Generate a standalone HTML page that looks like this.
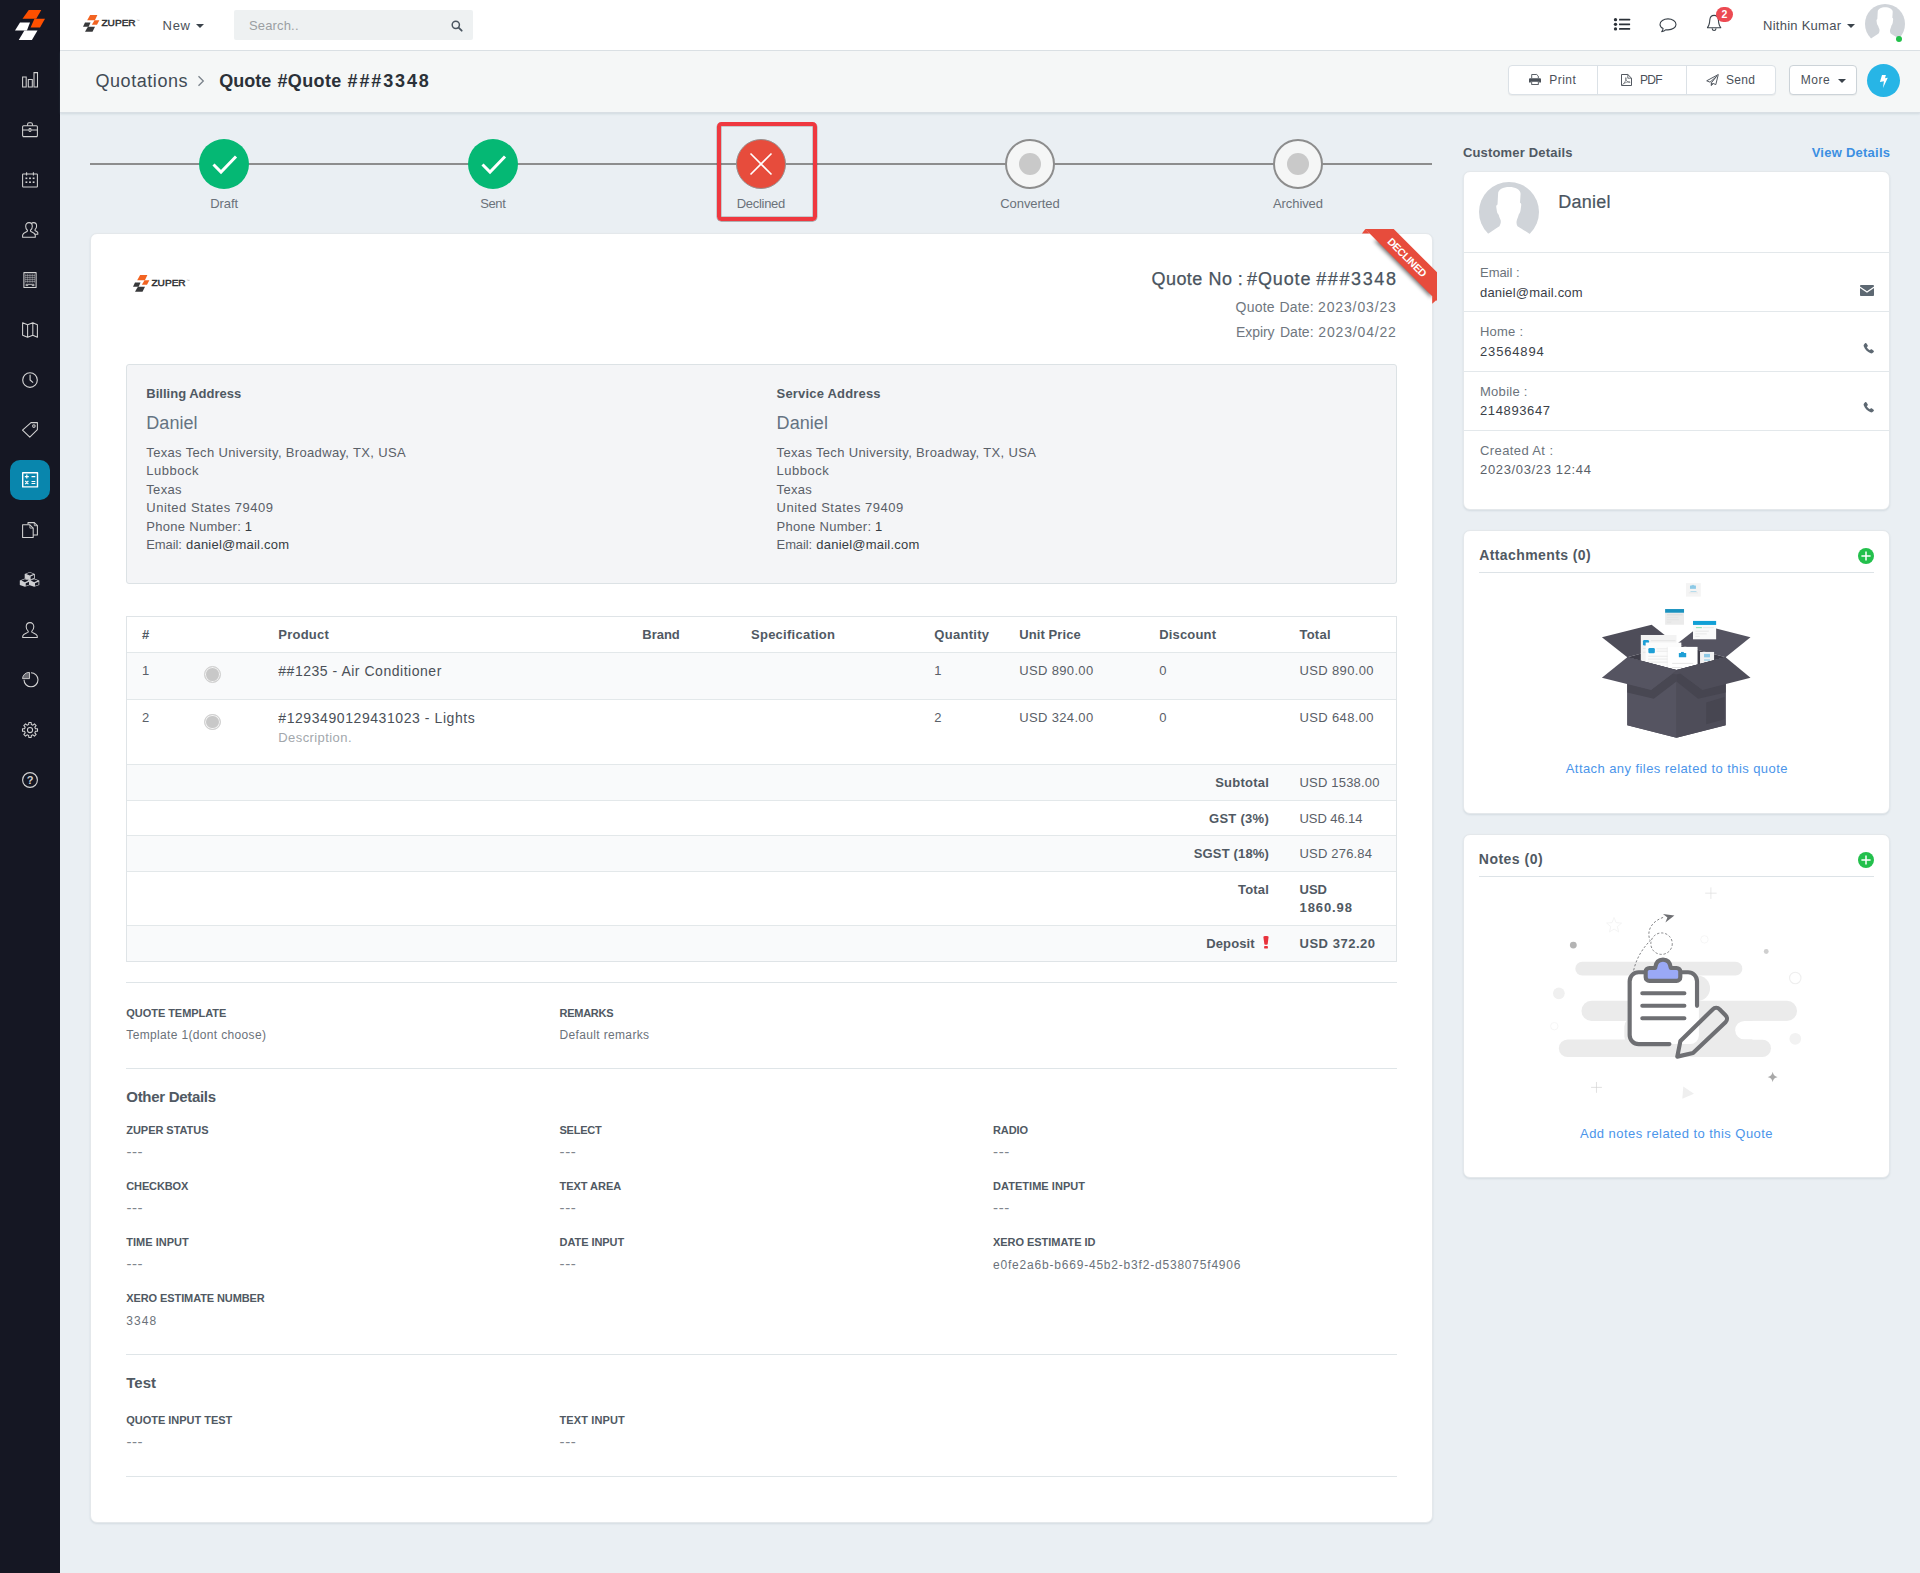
<!DOCTYPE html><html><head><meta charset="utf-8"><title>Quote #Quote ###3348</title><style>
*{box-sizing:border-box;margin:0;padding:0}
html,body{width:1920px;height:1573px;overflow:hidden}
body{position:relative;background:#eaeff3;font-family:"Liberation Sans",sans-serif;font-size:13px;color:#5a6068}
.t{position:absolute;white-space:nowrap;line-height:1;display:block}
.a{position:absolute;display:block}
.card{position:absolute;background:#fff;border:1px solid #e4e8eb;border-radius:7px;box-shadow:0 1px 2px rgba(60,80,100,.12)}
.hr{position:absolute;height:1px;background:#dfe5e8}
svg{position:absolute;overflow:visible}

</style></head><body>
<div class="a" style="left:0;top:0;width:60px;height:1573px;background:#151723"></div>
<div class="a" style="left:60px;top:0;width:1860px;height:51px;background:#fff;border-bottom:1px solid #dde2e6"></div>
<div class="a" style="left:60px;top:51px;width:1860px;height:62px;background:#f5f7f7;border-bottom:1px solid #d9dfe4;box-shadow:0 1px 2px rgba(120,140,160,.22)"></div>
<div class="a" style="left:234px;top:10px;width:239px;height:30px;background:#eef1f2;border-radius:2px"></div>
<div class="card" style="left:90px;top:233px;width:1343px;height:1290px"></div>
<div class="a" style="left:126px;top:364px;width:1271px;height:220px;background:#f4f5f7;border:1px solid #dce2e5;border-radius:3px"></div>
<div class="card" style="left:1463px;top:171px;width:427px;height:339px"></div>
<div class="card" style="left:1463px;top:530px;width:427px;height:284px"></div>
<div class="card" style="left:1463px;top:834px;width:427px;height:344px"></div>
<svg style="left:196px;top:24px" width="8" height="4" viewBox="0 0 8 4"><path d="M0 0h8L4 4z" fill="#3b434b"/></svg>
<svg style="left:1847px;top:24px" width="8" height="4" viewBox="0 0 8 4"><path d="M0 0h8L4 4z" fill="#3b434b"/></svg>
<svg style="left:197px;top:75px" width="8" height="12" viewBox="0 0 8 12"><path d="M1.5 1.2L6.3 6 1.5 10.8" fill="none" stroke="#7a828a" stroke-width="1.3"/></svg>
<div class="a" style="left:1508px;top:65px;width:268px;height:30px;background:#fff;border:1px solid #dbe1e6;border-radius:4px;box-shadow:0 1px 1px rgba(0,0,0,.05)"></div>
<div class="a" style="left:1597px;top:65px;width:1px;height:30px;background:#dbe1e6"></div>
<div class="a" style="left:1686px;top:65px;width:1px;height:30px;background:#dbe1e6"></div>
<div class="a" style="left:1789px;top:65px;width:68px;height:30px;background:#fff;border:1px solid #ccd3d8;border-radius:4px;box-shadow:0 1px 1px rgba(0,0,0,.05)"></div>
<div class="a" style="left:1866.800px;top:63.500px;width:33.400px;height:33.400px;background:#27b5e6;border-radius:50%"></div>
<svg style="left:1838px;top:79px" width="8" height="4" viewBox="0 0 8 4"><path d="M0 0h8L4 4z" fill="#3b434b"/></svg>
<div class="a" style="left:90px;top:162.5px;width:1342px;height:2px;background:#8d8d8d"></div>
<div class="a" style="left:199.2px;top:139px;width:50px;height:50px;border-radius:50%;background:#05b874"></div>
<svg style="left:199.2px;top:139px" width="50" height="50" viewBox="0 0 50 50"><path d="M14.5 25.5L22 33 37 17.5" fill="none" stroke="#fff" stroke-width="3"/></svg>
<div class="a" style="left:468px;top:139px;width:50px;height:50px;border-radius:50%;background:#05b874"></div>
<svg style="left:468px;top:139px" width="50" height="50" viewBox="0 0 50 50"><path d="M14.5 25.5L22 33 37 17.5" fill="none" stroke="#fff" stroke-width="3"/></svg>
<div class="a" style="left:717.300px;top:121.600px;width:99.300px;height:99px;border:4.200px solid #ef383f;border-radius:4.500px;box-shadow:0 .4px 0 .4px rgba(80,70,70,.5), inset 0 0 0 .5px rgba(80,70,70,.45)"></div>
<div class="a" style="left:736px;top:139px;width:50px;height:50px;border-radius:50%;background:#e74c3c;border:1px solid #97908f"></div>
<svg style="left:736px;top:139px" width="50" height="50" viewBox="0 0 50 50"><path d="M14.5 14.5L35.5 35.5M35.5 14.5L14.5 35.5" fill="none" stroke="#fff" stroke-width="1.6"/></svg>
<div class="a" style="left:1005px;top:139px;width:50px;height:50px;border-radius:50%;background:#f5f6f6;border:2px solid #8d8d8d"></div>
<div class="a" style="left:1019px;top:153px;width:22px;height:22px;border-radius:50%;background:#c9c9c9"></div>
<div class="a" style="left:1273px;top:139px;width:50px;height:50px;border-radius:50%;background:#f5f6f6;border:2px solid #8d8d8d"></div>
<div class="a" style="left:1287px;top:153px;width:22px;height:22px;border-radius:50%;background:#c9c9c9"></div>
<svg style="left:1340px;top:229.200px;overflow:hidden" width="97" height="90" viewBox="1340 229.200 97 90">
<defs><filter id="rsh" x="-30%" y="-30%" width="160%" height="160%"><feGaussianBlur stdDeviation="2.300"/></filter></defs>
<path d="M1376 238l8 0 50 50 0 8z" fill="#000" opacity=".62" filter="url(#rsh)" transform="translate(-2.100 2.100)"/>
<path d="M1361.900 233.700l3.500-4.500 4.200 4.500z" fill="#e74c3c"/><path d="M1437 299.800l-4.800 4.100v-7.600z" fill="#e74c3c"/>
<path d="M1365.100 229.200h28.600L1437 272.500v28.600z" fill="#e74c3c"/>
<text x="0" y="0" transform="translate(1407.200 257.600) rotate(45)" text-anchor="middle" font-family="Liberation Sans, sans-serif" font-size="10.500" font-weight="700" fill="#fff" dy="3.750" textLength="50.500">DECLINED</text>
</svg>
<div class="a" style="left:126px;top:616px;width:1271px;height:346px;border:1px solid #dfe4e7;background:#fff"></div>
<div class="a" style="left:127px;top:653px;width:1269px;height:46px;background:#f9fafb"></div>
<div class="a" style="left:127px;top:765px;width:1269px;height:35px;background:#f9fafb"></div>
<div class="a" style="left:127px;top:836px;width:1269px;height:35px;background:#f9fafb"></div>
<div class="a" style="left:127px;top:926px;width:1269px;height:35px;background:#f9fafb"></div>
<div class="a" style="left:127px;top:652px;width:1269px;height:1px;background:#e3e8ea"></div>
<div class="a" style="left:127px;top:699px;width:1269px;height:1px;background:#e3e8ea"></div>
<div class="a" style="left:127px;top:764px;width:1269px;height:1px;background:#e3e8ea"></div>
<div class="a" style="left:127px;top:800px;width:1269px;height:1px;background:#e3e8ea"></div>
<div class="a" style="left:127px;top:835px;width:1269px;height:1px;background:#e3e8ea"></div>
<div class="a" style="left:127px;top:871px;width:1269px;height:1px;background:#e3e8ea"></div>
<div class="a" style="left:127px;top:925px;width:1269px;height:1px;background:#e3e8ea"></div>
<div class="a" style="left:203.900px;top:666.4px;width:16.800px;height:16.800px;border-radius:50%;background:#c8c8c8;border:1px solid #d2d2d2;box-shadow:inset 0 0 0 1px #f3f3f3"></div>
<div class="a" style="left:203.900px;top:713.5px;width:16.800px;height:16.800px;border-radius:50%;background:#c8c8c8;border:1px solid #d2d2d2;box-shadow:inset 0 0 0 1px #f3f3f3"></div>
<svg style="left:1263px;top:935.500px" width="6" height="13" viewBox="0 0 6 13"><path d="M.4 .900C.4 .300 1.500 0 3 0s2.600.300 2.600.900L4.700 8c-.1.600-.8.800-1.700.800S1.400 8.600 1.300 8z" fill="#e8323c"/><rect x="1.100" y="9.900" width="3.800" height="2.700" rx=".9" fill="#e8323c"/></svg>
<div class="hr" style="left:126px;top:982px;width:1271px"></div>
<div class="hr" style="left:126px;top:1068px;width:1271px"></div>
<div class="hr" style="left:126px;top:1354px;width:1271px"></div>
<div class="hr" style="left:126px;top:1476px;width:1271px"></div>
<svg style="left:1479px;top:182px" width="60" height="60" viewBox="-30 -30 60 60">
<circle r="30" fill="#d0d4d9"/>
<g><path d="M.400-25.100C-6-25.100-10.900-22.500-10.900-18.250L-11.500-7.500c-.900.500-1.400 1.400-1.250 2.400l.650 4.350c.100 1.200.900 2.600 1.850 3.750.400 2 1.300 3.600 1.850 5 .500 1.700.100 4.300-1.200 6.250C-13 16.500-17.500 19.500-20.900 21.750L-32 27v8h64v-8L20.400 21.750C17 19.500 12 16.500 8.500 14.250 7.300 12 7.300 9.800 7.900 8c.500-1.500 1.400-3.600 1.850-5.600.900-1.100 1.650-2.700 1.850-4.400l.650-5c.100-1-.350-1.900-1.250-2.300l.600-8.950C11.600-22.500 6-25.100.400-25.100z" fill="#fff"/></g></svg>
<div class="hr" style="left:1464px;top:252px;width:425px;background:#e3e8eb"></div>
<div class="hr" style="left:1464px;top:311px;width:425px;background:#e3e8eb"></div>
<div class="hr" style="left:1464px;top:371px;width:425px;background:#e3e8eb"></div>
<div class="hr" style="left:1464px;top:430px;width:425px;background:#e3e8eb"></div>
<svg style="left:1859.5px;top:284.8px" width="14" height="11" viewBox="0 0 14 11"><path d="M0 1.100C0 .5.500 0 1.100 0h11.800c.6 0 1.100.5 1.100 1.100v.5L7 6.200 0 1.600zM0 3.100v6.800c0 .6.500 1.100 1.100 1.100h11.800c.6 0 1.100-.5 1.100-1.100V3.100L7 7.700z" fill="#5d6872"/></svg>
<svg style="left:1862.5px;top:343px" width="11" height="11" viewBox="0 0 12 12"><path d="M2.300.3C2.700-.1 3.300 0 3.600.4l1.500 2.100c.3.400.2.900-.1 1.200l-.9.800c.8 1.500 1.900 2.600 3.400 3.400l.8-.9c.3-.3.800-.4 1.200-.1l2.100 1.500c.4.300.5.900.1 1.300l-1 1c-.6.600-1.500.800-2.300.5C4.700 9.900 2.100 7.300.8 3.600.5 2.800.7 1.900 1.300 1.300z" fill="#5d6872"/></svg>
<svg style="left:1862.5px;top:402px" width="11" height="11" viewBox="0 0 12 12"><path d="M2.300.3C2.700-.1 3.300 0 3.600.4l1.500 2.100c.3.400.2.900-.1 1.200l-.9.800c.8 1.500 1.900 2.600 3.400 3.400l.8-.9c.3-.3.800-.4 1.200-.1l2.100 1.500c.4.300.5.900.1 1.300l-1 1c-.6.600-1.500.800-2.300.5C4.700 9.900 2.100 7.300.8 3.600.5 2.800.7 1.900 1.300 1.300z" fill="#5d6872"/></svg>
<svg style="left:1858.2px;top:547.7px" width="16" height="16" viewBox="0 0 16 16"><circle cx="8" cy="8" r="8" fill="#23c04c"/><path d="M8 3.400v9.200M3.400 8h9.200" stroke="#fff" stroke-width="1.500"/></svg>
<svg style="left:1858.2px;top:852px" width="16" height="16" viewBox="0 0 16 16"><circle cx="8" cy="8" r="8" fill="#23c04c"/><path d="M8 3.400v9.200M3.400 8h9.200" stroke="#fff" stroke-width="1.500"/></svg>
<div class="hr" style="left:1479px;top:572px;width:395px;background:#dde3e7"></div>
<div class="hr" style="left:1479px;top:876px;width:395px;background:#dde3e7"></div>
<svg style="left:15px;top:10px" width="30" height="30" viewBox="0 0 30 30">
<path d="M13.750 0h12.500l-5 8.750H7.500z" fill="#fe5000"/><path d="M19.400 8.750H30l-5 8.750h-9.400z" fill="#fe5000"/>
<path d="M5 12.500h10l-3.100 8.100H0z" fill="#fff"/><path d="M9.400 20.600h13.100L16.900 30H3.750z" fill="#fff"/></svg>
<svg style="left:83.1px;top:15.3px" width="60" height="18" viewBox="0 0 60 18">
<path d="M7.100 0h7.300l-2.500 5.300H4.200z" fill="#f26321"/><path d="M11.500 5.300h4.900L14 9.700H8.900z" fill="#f26321"/>
<path d="M2 7.600h5.500L5.700 11.700H0z" fill="#38393b"/><path d="M4.900 11.800H12l-2.500 5H2z" fill="#38393b"/>
<text x="18.400" y="11.350" font-family="Liberation Sans, sans-serif" font-size="8.400" font-weight="400" fill="#2c2d2f" stroke="#2c2d2f" stroke-width=".38" textLength="34.300" lengthAdjust="spacingAndGlyphs">ZUPER</text>
<text x="53.800" y="7" font-family="Liberation Sans, sans-serif" font-size="3.200" fill="#9a9a9a">™</text></svg>
<svg style="left:133.1px;top:275.4px" width="60" height="18" viewBox="0 0 60 18">
<path d="M7.100 0h7.300l-2.500 5.300H4.200z" fill="#f26321"/><path d="M11.500 5.300h4.900L14 9.700H8.900z" fill="#f26321"/>
<path d="M2 7.600h5.500L5.700 11.700H0z" fill="#38393b"/><path d="M4.900 11.800H12l-2.500 5H2z" fill="#38393b"/>
<text x="18.400" y="11.350" font-family="Liberation Sans, sans-serif" font-size="8.400" font-weight="400" fill="#2c2d2f" stroke="#2c2d2f" stroke-width=".38" textLength="34.300" lengthAdjust="spacingAndGlyphs">ZUPER</text>
<text x="53.800" y="7" font-family="Liberation Sans, sans-serif" font-size="3.200" fill="#9a9a9a">™</text></svg>
<div class="a" style="left:10px;top:460px;width:40px;height:40px;border-radius:10px;background:#0986ad"></div>
<svg style="left:22px;top:72px" width="16" height="16" viewBox="0 0 16 16" fill="none" stroke="#d2d2d2" stroke-width="1.05" stroke-linejoin="round"><path d="M.600 5h3.600v10H.600zM6.300 7.500h4V15h-4zM12 .600h3.500V15H12z" stroke-linejoin="miter"/></svg>
<svg style="left:22px;top:122px" width="16" height="16" viewBox="0 0 16 16" fill="none" stroke="#d2d2d2" stroke-width="1.05" stroke-linejoin="round"><rect x=".600" y="3.700" width="14.800" height="10.700" rx="1"/><path d="M5.600 3.700V2.300c0-1 .600-1.600 1.400-1.600h2c.8 0 1.400.6 1.400 1.600v1.400M.600 8h6.200M9.200 8h6.200M.800 14.600h14.400" /><rect x="7" y="6.600" width="2" height="2.800" rx=".8"/></svg>
<svg style="left:22px;top:172px" width="16" height="16" viewBox="0 0 16 16" fill="none" stroke="#d2d2d2" stroke-width="1.05" stroke-linejoin="round"><rect x=".600" y="2" width="14.800" height="13" rx=".6"/><path d="M4.600 .3v3.200M11.400 .3v3.200"/><g stroke="none" fill="#d2d2d2"><rect x="3.500" y="5.500" width="1.800" height="1.600"/><rect x="7.100" y="5.500" width="1.800" height="1.600"/><rect x="10.700" y="5.500" width="1.800" height="1.600"/><rect x="3.500" y="9.400" width="1.800" height="1.600"/><rect x="7.100" y="9.400" width="1.800" height="1.600"/><rect x="10.700" y="9.400" width="1.800" height="1.600"/></g></svg>
<svg style="left:22px;top:222px" width="16" height="16" viewBox="0 0 16 16" fill="none" stroke="#d2d2d2" stroke-width="1.05" stroke-linejoin="round"><path d="M9.300 1.700C10 .9 10.800 .6 11.600 .6c1.800 0 3 1.500 3 3.400 0 1.500-.6 2.700-1.400 3.400-.3.300-.3 1.100.2 1.400.9.500 2.200 1.100 2.400 1.800v1.700h-3"/><path d="M7 .6c2 0 3.300 1.600 3.300 3.700 0 1.600-.7 3-1.600 3.700-.4.300-.3 1.200.2 1.500 1.400.800 3.900 1.600 4.300 3.300.1.600.1 1.600.1 2.400H.600c0-.8 0-1.800.1-2.400.400-1.700 2.900-2.500 4.300-3.300.5-.3.600-1.200.2-1.500C4.300 7.300 3.700 5.900 3.700 4.300 3.700 2.200 5 .6 7 .6z"/></svg>
<svg style="left:22px;top:272px" width="16" height="16" viewBox="0 0 16 16" fill="none" stroke="#d2d2d2" stroke-width="1.05" stroke-linejoin="round"><rect x="1.900" y=".600" width="12.200" height="14.800"/><g stroke-width=".55" opacity=".75"><path d="M3.800 2v8.800M5.500 2v8.800M7.200 2v8.800M8.900 2v8.800M10.600 2v8.800M12.300 2v8.800M3 3.500h10M3 5.500h10M3 7.500h10M3 9.500h10"/></g><path d="M3.600 12.300h8.800M3.600 13.600h2.600M9.800 13.600h2.600" stroke-width=".9"/></svg>
<svg style="left:22px;top:322px" width="16" height="16" viewBox="0 0 16 16" fill="none" stroke="#d2d2d2" stroke-width="1.05" stroke-linejoin="round"><path d="M.600 .700L5.600 2.700 10.800 .700 15.400 2.700V15.300L10.800 13.300 5.600 15.300.600 13.300zM5.600 2.700v12.600M10.800 .700v12.600"/></svg>
<svg style="left:22px;top:372px" width="16" height="16" viewBox="0 0 16 16" fill="none" stroke="#d2d2d2" stroke-width="1.15" stroke-linejoin="round"><circle cx="8" cy="8" r="7.300"/><path d="M8.100 2.800V8l3 2.600"/></svg>
<svg style="left:22px;top:422px" width="16" height="16" viewBox="0 0 16 16" fill="none" stroke="#d2d2d2" stroke-width="1.05" stroke-linejoin="round"><path d="M9 .600h6.400V7.600L7.800 15.200.500 8.200z"/><circle cx="11.900" cy="4.100" r="1.300"/></svg>
<svg style="left:22px;top:472px" width="16" height="16" viewBox="0 0 16 16" fill="none" stroke="#fff" stroke-width="1.05" stroke-linejoin="round"><rect x=".700" y=".700" width="14.800" height="14.200" stroke-width="1.400"/><path d="M2.800 4.600h4M4.800 2.600v4M9.500 4.600h3.800M3.200 8.900l3.200 3.200M6.400 8.900L3.200 12.100M9.500 9.500h3.800M9.500 11.500h3.800" stroke-width="1.200"/></svg>
<svg style="left:22px;top:522px" width="16" height="16" viewBox="0 0 16 16" fill="none" stroke="#d2d2d2" stroke-width="1.05" stroke-linejoin="round"><path d="M6 2.300V.600h6.300l3.100 3.100v9.200h-4.200"/><path d="M12.300 .600v3.100h3.100" stroke-width=".8"/><path d="M.600 2.800h7.300l3.300 3.300v9.300H.600z"/><path d="M7.900 2.800v3.300h3.300" stroke-width=".8"/></svg>
<svg style="left:15px;top:565px" width="30" height="30" viewBox="15 565 30 30"><path d="M29.80 571.90L34.90 574.00L34.90 578.50L29.80 580.20L24.70 578.50L24.70 574.00z" fill="#cdced1"/><path d="M29.80 572.54L33.37 574.01L29.80 575.62L26.23 574.01z" fill="#151723"/><path d="M34.08 575.04L34.08 578.10L30.62 579.26L30.62 576.60z" fill="#151723"/><path d="M24.90 578.50L30.00 580.60L30.00 585.10L24.90 586.80L19.80 585.10L19.80 580.60z" fill="#cdced1"/><path d="M24.90 579.14L28.47 580.62L24.90 582.23L21.33 580.62z" fill="#151723"/><path d="M29.18 581.64L29.18 584.70L25.72 585.86L25.72 583.20z" fill="#151723"/><path d="M34.20 578.50L39.30 580.60L39.30 585.10L34.20 586.80L29.10 585.10L29.10 580.60z" fill="#cdced1"/><path d="M34.20 579.14L37.77 580.62L34.20 582.23L30.63 580.62z" fill="#151723"/><path d="M38.48 581.64L38.48 584.70L35.02 585.86L35.02 583.20z" fill="#151723"/></svg>
<svg style="left:22px;top:622px" width="16" height="16" viewBox="0 0 16 16" fill="none" stroke="#d2d2d2" stroke-width="1.05" stroke-linejoin="round"><path d="M8 .600c2.300 0 3.800 1.800 3.800 4.200 0 1.800-.8 3.300-1.800 4.100-.4.300-.3 1.200.2 1.500 1.600.800 4.400 1.500 4.900 3.200.2.600.2 1.200.2 1.800H.700c0-.6 0-1.200.2-1.800.5-1.700 3.300-2.400 4.900-3.200.5-.3.600-1.200.2-1.500-1-.800-1.800-2.300-1.800-4.100C4.200 2.400 5.700.6 8 .6z"/></svg>
<svg style="left:22px;top:672px" width="16" height="16" viewBox="0 0 16 16" fill="none" stroke="#d2d2d2" stroke-width="1.1" stroke-linejoin="round"><path d="M9 .800A7 7 0 1 1 2 7.800"/><path d="M.500 6.600A6.600 6.600 0 0 1 7.500 .400V6.600z" fill="#d2d2d2" fill-opacity=".45" stroke-width=".9"/></svg>
<svg style="left:22px;top:722px" width="16" height="16" viewBox="0 0 16 16" fill="none" stroke="#d2d2d2" stroke-width="1.05" stroke-linejoin="round"><path d="M6.81 0.49L9.19 0.49L9.31 2.55L10.93 3.23L12.47 1.85L14.15 3.53L12.77 5.07L13.45 6.69L15.51 6.81L15.51 9.19L13.45 9.31L12.77 10.93L14.15 12.47L12.47 14.15L10.93 12.77L9.31 13.45L9.19 15.51L6.81 15.51L6.69 13.45L5.07 12.77L3.53 14.15L1.85 12.47L3.23 10.93L2.55 9.31L0.49 9.19L0.49 6.81L2.55 6.69L3.23 5.07L1.85 3.53L3.53 1.85L5.07 3.23L6.69 2.55z"/><circle cx="8" cy="8" r="2.600"/></svg>
<svg style="left:22px;top:772px" width="16" height="16" viewBox="0 0 16 16" fill="none" stroke="#d2d2d2" stroke-width="1.15" stroke-linejoin="round"><circle cx="8" cy="8" r="7.400"/><text x="8" y="12" text-anchor="middle" font-family="Liberation Sans, sans-serif" font-size="11" font-weight="700" fill="#d2d2d2" stroke="none">?</text></svg>
<svg style="left:1613px;top:17px" width="18" height="14" viewBox="1613 17 18 14"><g fill="#2b3138"><circle cx="1615.500" cy="19.700" r="1.650"/><circle cx="1615.500" cy="24.300" r="1.650"/><circle cx="1615.500" cy="28.900" r="1.650"/><rect x="1619" y="18.800" width="11.100" height="1.800" rx=".4"/><rect x="1619" y="23.400" width="11.100" height="1.800" rx=".4"/><rect x="1619" y="28" width="11.100" height="1.800" rx=".4"/></g></svg>
<svg style="left:1659px;top:17px" width="18" height="16" viewBox="1659 17 18 16"><path d="M1668 18.900c4.400 0 8 2.400 8 5.500s-3.600 5.500-8 5.500c-.7 0-1.400-.1-2-.2-1 .9-2.500 1.800-4.300 2 .8-.9 1.300-1.900 1.400-3.200-1.900-1-3.100-2.500-3.100-4.100 0-3.100 3.600-5.500 8-5.500z" fill="none" stroke="#3b434b" stroke-width="1.100" stroke-linejoin="round"/></svg>
<svg style="left:1706px;top:14px" width="17" height="18" viewBox="1706 14 17 18"><path d="M1714.100 15.400c2.600 0 4.100 1.900 4.300 4.600.2 3 .5 5.600 2.300 7.300v.4h-13.200v-.4c1.800-1.700 2.100-4.300 2.300-7.300.2-2.700 1.700-4.600 4.300-4.600z" fill="none" stroke="#3b434b" stroke-width="1.100" stroke-linejoin="round"/><path d="M1712.100 28.300c.2 1.300 1 2.200 2 2.200s1.800-.9 2-2.200" fill="none" stroke="#3b434b" stroke-width="1.100"/></svg>
<div class="a" style="left:1716.100px;top:6.700px;width:16.800px;height:15.300px;border-radius:7.650px;background:#ec4a52"></div>
<svg style="left:1865px;top:4px" width="40" height="40" viewBox="-30 -30 60 60">
<circle r="30" fill="#d0d4d9"/>
<g><path d="M.400-25.100C-6-25.100-10.900-22.500-10.900-18.250L-11.500-7.500c-.900.500-1.400 1.400-1.250 2.400l.650 4.350c.100 1.200.900 2.600 1.850 3.750.400 2 1.300 3.600 1.850 5 .500 1.700.100 4.300-1.200 6.250C-13 16.500-17.500 19.500-20.900 21.750L-32 27v8h64v-8L20.400 21.750C17 19.500 12 16.500 8.500 14.250 7.300 12 7.300 9.800 7.900 8c.500-1.500 1.400-3.600 1.850-5.600.900-1.100 1.650-2.700 1.850-4.400l.650-5c.100-1-.350-1.900-1.250-2.300l.600-8.950C11.600-22.500 6-25.100.400-25.100z" fill="#fff"/></g></svg>
<div class="a" style="left:1895.800px;top:35.800px;width:6.400px;height:6.400px;border-radius:50%;background:#22c04a"></div>
<svg style="left:451px;top:19.500px" width="12" height="12" viewBox="0 0 12 12"><circle cx="4.800" cy="4.800" r="3.600" fill="none" stroke="#4a5560" stroke-width="1.500"/><path d="M7.600 7.600l3.100 3.100" stroke="#4a5560" stroke-width="1.800" stroke-linecap="round"/></svg>
<svg style="left:1529px;top:74px" width="12" height="11" viewBox="0 0 12 11"><path d="M2.700 4.200V.500h5l1.600 1.600v2.100" fill="#fff" stroke="#4a5058" stroke-width=".9"/><path d="M1.200 4.200h9.600c.7 0 1.200.5 1.200 1.200v3.100h-1.900V7.200H1.900v1.300H0V5.400c0-.7.500-1.200 1.200-1.200z" fill="#4a5058"/><rect x="2.700" y="7.300" width="6.600" height="3.200" fill="#fff" stroke="#4a5058" stroke-width=".9"/></svg>
<svg style="left:1620.500px;top:74px" width="11" height="12" viewBox="0 0 11 12"><path d="M.500 .500h6.300l3.700 3.700v7.300H.500z" fill="none" stroke="#4a5058" stroke-width=".95"/><path d="M6.800 .500v3.700h3.700" fill="none" stroke="#4a5058" stroke-width=".8"/><path d="M2 10.300c1.400-1 2.800-3.600 3.200-6.100.1-.8-.8-.8-.7 0 .3 2.200 2 4 4 4.300.9.100.9-.8 0-.8-2 .1-4.600 1-6.200 2.200-.6.500-.9.800-.3.400z" fill="none" stroke="#4a5058" stroke-width=".6"/></svg>
<svg style="left:1706px;top:74px" width="13" height="12" viewBox="0 0 13 12"><path d="M12.300 .500L.700 6.800l3.300 1.400 6.600-5.800-5.300 6.500v2.700l1.900-2.100 2.600 1.100z" fill="none" stroke="#4a5058" stroke-width=".95" stroke-linejoin="round"/><path d="M5.300 8.900l1.900 .6-1.900 2.100z" fill="#4a5058"/></svg>
<svg style="left:1879px;top:74px" width="10" height="15" viewBox="1879 74 10 15"><path d="M1882 75.100h3.900l-.9 3.100 2.800-.5-4.800 10.400.9-6.900-4 .7z" fill="#fff"/></svg>
<svg style="left:1590px;top:575px" width="175" height="170" viewBox="0 0 1619 1573">
<path d="M110 575L570 460 800 640 345 760z" fill="#4e4d59"/>
<path d="M1485 575L1030 460 800 640 1255 760z" fill="#555461"/>
<path d="M345 760L800 640 1255 760 800 880z" fill="#3f3e49"/>
<g>
<rect x="470" y="555" width="330" height="300" fill="#f3f3f3"/><rect x="490" y="602" width="56" height="50" rx="12" fill="#1e9fd6"/><path d="M565 607h225M490 680h290M490 715h290" stroke="#e4e4e4" stroke-width="9"/>
<rect x="515" y="625" width="330" height="260" fill="#fcfcfc"/><rect x="540" y="675" width="60" height="50" rx="12" fill="#1e9fd6"/><path d="M615 683h200M615 705h160M538 752h280M538 778h280M538 806h280" stroke="#e9e9e9" stroke-width="9"/>
<rect x="720" y="665" width="275" height="230" fill="#fff"/><path d="M715 665v230" stroke="#eee" stroke-width="6"/><rect x="822" y="722" width="68" height="40" rx="5" fill="#1e9fd6"/><rect x="842" y="712" width="26" height="14" fill="#1e9fd6"/><path d="M760 818h195M760 856h90" stroke="#e2e2e2" stroke-width="8"/>
<rect x="1018" y="712" width="130" height="130" fill="#f1f1f1"/><rect x="1055" y="730" width="55" height="32" fill="#8cc9e6"/><rect x="1055" y="778" width="55" height="18" fill="#b5dbec"/>
</g>
<path d="M345 760L800 880 1255 760V1390L800 1505 345 1390z" fill="#4e4d59"/>
<path d="M345 760L800 880V1505L345 1390z" fill="#555461"/>
<path d="M800 880L1255 760V1390L800 1505z" fill="#4e4d59"/>
<path d="M345 1005L565 1062 800 885V985L590 1145 345 1088z" fill="#484752"/>
<path d="M800 885L1040 1062 1255 1005V1088L1000 1145 800 985z" fill="#464550"/>
<path d="M1075 1180L1245 1130V1335L1075 1382z" fill="#474651"/>
<path d="M345 758L800 880 1255 758 1255 800 800 920 345 800z" fill="#4e4d59"/>
<path d="M345 760L800 882 565 1065 110 950z" fill="#555461"/>
<path d="M800 882L1255 760 1485 950 1040 1065z" fill="#4e4d59"/>
<rect x="695" y="315" width="175" height="145" fill="#ebebeb"/><rect x="695" y="315" width="175" height="34" fill="#1a92bf"/><path d="M712 368h145" stroke="#dcdcdc" stroke-width="10"/><path d="M712 392h105M712 414h110M712 436h40" stroke="#e2e2e2" stroke-width="8"/>
<rect x="953" y="425" width="214" height="170" fill="#fafafa"/><rect x="953" y="425" width="214" height="37" fill="#12a0d6"/><path d="M980 487h55" stroke="#8fe3b5" stroke-width="10"/><path d="M1045 487h100M975 520h125M975 545h105M975 568h40" stroke="#e6e6e6" stroke-width="8"/>
<rect x="888" y="75" width="137" height="125" fill="#f4f4f4"/><rect x="925" y="98" width="55" height="30" fill="#8cc9e6"/><rect x="940" y="92" width="24" height="8" fill="#8cc9e6"/><path d="M930 153h55" stroke="#9fd3ea" stroke-width="7"/><path d="M915 165h83" stroke="#e0e0e0" stroke-width="6"/>
</svg>
<svg style="left:1545px;top:880px" width="265" height="225" viewBox="0 0 1853 1573">
<rect x="212" y="572" width="1168" height="96" rx="48" fill="#ebebeb"/>
<circle cx="1065" cy="757" r="89" fill="#ebebeb"/>
<rect x="255" y="845" width="1507" height="140" rx="70" fill="#ebebeb"/>
<rect x="555" y="960" width="900" height="200" rx="65" fill="#ebebeb"/>
<rect x="1330" y="985" width="600" height="130" rx="65" fill="#fff"/>
<rect x="97" y="1115" width="1483" height="123" rx="61" fill="#ebebeb"/>
<rect x="1450" y="985" width="400" height="130" fill="#fff"/>
<path d="M620 632C640 540 690 470 735 425c-30-80 20-140 95-165" fill="none" stroke="#6e6f73" stroke-width="6" stroke-dasharray="16 13"/>
<circle cx="815" cy="445" r="75" fill="none" stroke="#6e6f73" stroke-width="6" stroke-dasharray="16 13"/>
<path d="M825 238l80 10-63 49 14-35z" fill="#6e6f73"/>
<rect x="592" y="645" width="484" height="502" rx="60" fill="#fff"/>
<path d="M870 1147H655c-35 0-63-28-63-63V708c0-35 28-63 63-63h345c35 0 63 28 63 63v172" fill="none" stroke="#6e6f73" stroke-width="29" stroke-linecap="round"/>
<path d="M730 615h40c5-40 25-58 55-58s50 18 55 58h40c15 0 26 10 26 25v40c0 15-11 25-26 25H730c-15 0-26-10-26-25v-40c0-15 11-25 26-25z" fill="#9aa9f6" stroke="#6e6f73" stroke-width="29" stroke-linejoin="round"/>
<path d="M680 791h295M680 879h295M680 967h295" stroke="#6e6f73" stroke-width="28" stroke-linecap="round"/>
<path d="M925 1235l22-110L1172 905c14-14 36-14 50 0l40 40c14 14 14 36 0 50L1035 1210z" fill="none" stroke="#6e6f73" stroke-width="29" stroke-linejoin="round"/>
<path d="M1120 92h80M1160 52v80" stroke="#dedede" stroke-width="5"/>
<path d="M322 1450h76M360 1412v76" stroke="#d0d0d0" stroke-width="4.500"/>
<path d="M483 262l14 36 38 3-29 25 9 37-32-20-32 20 9-37-29-25 38-3z" fill="none" stroke="#f0f0f0" stroke-width="5"/>
<circle cx="198" cy="455" r="24" fill="#b4b4b4"/><circle cx="1547" cy="500" r="17" fill="#cfcfcf"/>
<circle cx="1115" cy="415" r="26" fill="none" stroke="#f3f3f3" stroke-width="5"/>
<circle cx="1750" cy="685" r="40" fill="none" stroke="#efefef" stroke-width="8"/>
<circle cx="65" cy="1022" r="26" fill="none" stroke="#f3f3f3" stroke-width="5"/>
<circle cx="97" cy="792" r="41" fill="#f0f0f0"/><circle cx="1750" cy="1110" r="41" fill="#f2f2f2"/>
<path d="M1592 1340c5 22 12 30 35 37-23 7-30 15-35 37-5-22-12-30-35-37 23-7 30-15 35-37z" fill="#a8a8a8"/>
<path d="M967 1443l75 52-82 34z" fill="#efefef"/>
</svg>
<span class="t" id="t0" style="left:162.50px;top:19.00px;font-size:13px;color:#4a5058;letter-spacing:0.742px;">New</span>
<span class="t" id="t1" style="left:249.00px;top:19.00px;font-size:13px;color:#9b9fa3;letter-spacing:0.154px;">Search..</span>
<span class="t" id="t2" style="left:1763.00px;top:19.00px;font-size:13px;color:#4a5058;letter-spacing:0.260px;">Nithin Kumar</span>
<span class="t" id="t3" style="left:95.50px;top:72.00px;font-size:18px;color:#414b55;letter-spacing:0.549px;">Quotations</span>
<span class="t" id="t4" style="left:219.20px;top:72.00px;font-size:18px;color:#2b3138;font-weight:700;">Quote</span>
<span class="t" id="t5" style="left:277.50px;top:72.00px;font-size:18px;color:#2b3138;font-weight:700;letter-spacing:0.357px;">#Quote</span>
<span class="t" id="t6" style="left:347.50px;top:72.00px;font-size:18px;color:#2b3138;font-weight:700;letter-spacing:1.870px;">###3348</span>
<span class="t" id="t7" style="left:1549.30px;top:74.00px;font-size:12px;color:#4a5058;letter-spacing:0.453px;">Print</span>
<span class="t" id="t8" style="left:1640.00px;top:74.00px;font-size:12px;color:#4a5058;letter-spacing:-0.750px;">PDF</span>
<span class="t" id="t9" style="left:1726.00px;top:74.00px;font-size:12px;color:#4a5058;letter-spacing:0.323px;">Send</span>
<span class="t" id="t10" style="left:1800.80px;top:74.00px;font-size:12px;color:#4a5058;letter-spacing:0.552px;">More</span>
<span class="t" id="t11" style="left:210.20px;top:197.00px;font-size:13px;color:#6b727a;letter-spacing:-0.043px;">Draft</span>
<span class="t" id="t12" style="left:480.25px;top:197.00px;font-size:13px;color:#6b727a;letter-spacing:-0.417px;">Sent</span>
<span class="t" id="t13" style="left:736.75px;top:197.00px;font-size:13px;color:#6b727a;letter-spacing:-0.299px;">Declined</span>
<span class="t" id="t14" style="left:1000.25px;top:197.00px;font-size:13px;color:#6b727a;letter-spacing:-0.061px;">Converted</span>
<span class="t" id="t15" style="left:1273.00px;top:197.00px;font-size:13px;color:#6b727a;letter-spacing:-0.083px;">Archived</span>
<span class="t" id="t16" style="left:1151.50px;top:270.00px;font-size:18px;color:#4a545e;letter-spacing:0.438px;-webkit-text-stroke:.25px #4a545e;">Quote</span>
<span class="t" id="t17" style="left:1208.50px;top:270.00px;font-size:18px;color:#4a545e;letter-spacing:0.384px;-webkit-text-stroke:.25px #4a545e;">No</span>
<span class="t" id="t18" style="left:1237.80px;top:270.00px;font-size:18px;color:#4a545e;-webkit-text-stroke:.25px #4a545e;">:</span>
<span class="t" id="t19" style="left:1247.10px;top:270.00px;font-size:18px;color:#4a545e;letter-spacing:0.851px;-webkit-text-stroke:.25px #4a545e;">#Quote</span>
<span class="t" id="t20" style="left:1316.20px;top:270.00px;font-size:18px;color:#4a545e;letter-spacing:1.604px;-webkit-text-stroke:.25px #4a545e;">###3348</span>
<span class="t" id="t21" style="left:1235.50px;top:300.00px;font-size:14px;color:#6f7780;letter-spacing:0.240px;">Quote</span>
<span class="t" id="t22" style="left:1279.40px;top:300.00px;font-size:14px;color:#6f7780;letter-spacing:0.183px;">Date:</span>
<span class="t" id="t23" style="left:1318.00px;top:300.00px;font-size:14px;color:#6f7780;letter-spacing:0.869px;">2023/03/23</span>
<span class="t" id="t24" style="left:1236.00px;top:325.00px;font-size:14px;color:#6f7780;letter-spacing:-0.061px;">Expiry</span>
<span class="t" id="t25" style="left:1279.90px;top:325.00px;font-size:14px;color:#6f7780;letter-spacing:0.058px;">Date:</span>
<span class="t" id="t26" style="left:1318.30px;top:325.00px;font-size:14px;color:#6f7780;letter-spacing:0.836px;">2023/04/22</span>
<span class="t" id="t27" style="left:146.30px;top:387.00px;font-size:13px;color:#505963;font-weight:700;letter-spacing:0.009px;">Billing Address</span>
<span class="t" id="t28" style="left:146.30px;top:414.00px;font-size:18px;color:#647382;letter-spacing:0.054px;">Daniel</span>
<span class="t" id="t29" style="left:146.30px;top:446.00px;font-size:13px;color:#5a6068;letter-spacing:0.337px;">Texas Tech University, Broadway, TX, USA</span>
<span class="t" id="t30" style="left:146.30px;top:464.00px;font-size:13px;color:#5a6068;letter-spacing:0.507px;">Lubbock</span>
<span class="t" id="t31" style="left:146.30px;top:483.00px;font-size:13px;color:#5a6068;letter-spacing:0.308px;">Texas</span>
<span class="t" id="t32" style="left:146.30px;top:501.00px;font-size:13px;color:#5a6068;letter-spacing:0.488px;">United States 79409</span>
<span class="t" id="t33" style="left:146.30px;top:520.00px;font-size:13px;color:#5a6068;letter-spacing:0.286px;">Phone Number:</span>
<span class="t" id="t34" style="left:244.80px;top:520.00px;font-size:13px;color:#363c42;">1</span>
<span class="t" id="t35" style="left:146.30px;top:538.00px;font-size:13px;color:#5a6068;letter-spacing:-0.125px;">Email:</span>
<span class="t" id="t36" style="left:186.00px;top:538.00px;font-size:13px;color:#363c42;letter-spacing:0.221px;">daniel@mail.com</span>
<span class="t" id="t37" style="left:776.60px;top:387.00px;font-size:13px;color:#505963;font-weight:700;letter-spacing:0.184px;">Service Address</span>
<span class="t" id="t38" style="left:776.60px;top:414.00px;font-size:18px;color:#647382;letter-spacing:0.054px;">Daniel</span>
<span class="t" id="t39" style="left:776.60px;top:446.00px;font-size:13px;color:#5a6068;letter-spacing:0.337px;">Texas Tech University, Broadway, TX, USA</span>
<span class="t" id="t40" style="left:776.60px;top:464.00px;font-size:13px;color:#5a6068;letter-spacing:0.507px;">Lubbock</span>
<span class="t" id="t41" style="left:776.60px;top:483.00px;font-size:13px;color:#5a6068;letter-spacing:0.308px;">Texas</span>
<span class="t" id="t42" style="left:776.60px;top:501.00px;font-size:13px;color:#5a6068;letter-spacing:0.488px;">United States 79409</span>
<span class="t" id="t43" style="left:776.60px;top:520.00px;font-size:13px;color:#5a6068;letter-spacing:0.286px;">Phone Number:</span>
<span class="t" id="t44" style="left:875.10px;top:520.00px;font-size:13px;color:#363c42;">1</span>
<span class="t" id="t45" style="left:776.60px;top:538.00px;font-size:13px;color:#5a6068;letter-spacing:-0.125px;">Email:</span>
<span class="t" id="t46" style="left:816.30px;top:538.00px;font-size:13px;color:#363c42;letter-spacing:0.221px;">daniel@mail.com</span>
<span class="t" id="t47" style="left:142.00px;top:628.00px;font-size:13px;color:#505963;font-weight:700;">#</span>
<span class="t" id="t48" style="left:278.30px;top:628.00px;font-size:13px;color:#505963;font-weight:700;letter-spacing:0.229px;">Product</span>
<span class="t" id="t49" style="left:642.30px;top:628.00px;font-size:13px;color:#505963;font-weight:700;letter-spacing:-0.016px;">Brand</span>
<span class="t" id="t50" style="left:751.00px;top:628.00px;font-size:13px;color:#505963;font-weight:700;letter-spacing:0.257px;">Specification</span>
<span class="t" id="t51" style="left:934.30px;top:628.00px;font-size:13px;color:#505963;font-weight:700;letter-spacing:0.281px;">Quantity</span>
<span class="t" id="t52" style="left:1019.20px;top:628.00px;font-size:13px;color:#505963;font-weight:700;letter-spacing:0.101px;">Unit Price</span>
<span class="t" id="t53" style="left:1159.20px;top:628.00px;font-size:13px;color:#505963;font-weight:700;letter-spacing:0.168px;">Discount</span>
<span class="t" id="t54" style="left:1299.50px;top:628.00px;font-size:13px;color:#505963;font-weight:700;letter-spacing:0.227px;">Total</span>
<span class="t" id="t55" style="left:142.00px;top:664.00px;font-size:13px;color:#5a6068;">1</span>
<span class="t" id="t56" style="left:278.30px;top:664.00px;font-size:14px;color:#4a5058;letter-spacing:0.522px;">##1235 - Air Conditioner</span>
<span class="t" id="t57" style="left:934.30px;top:664.00px;font-size:13px;color:#5a6068;">1</span>
<span class="t" id="t58" style="left:1019.20px;top:664.00px;font-size:13px;color:#5a6068;letter-spacing:0.352px;">USD 890.00</span>
<span class="t" id="t59" style="left:1159.20px;top:664.00px;font-size:13px;color:#5a6068;">0</span>
<span class="t" id="t60" style="left:1299.50px;top:664.00px;font-size:13px;color:#5a6068;letter-spacing:0.352px;">USD 890.00</span>
<span class="t" id="t61" style="left:142.00px;top:711.00px;font-size:13px;color:#5a6068;">2</span>
<span class="t" id="t62" style="left:278.30px;top:711.00px;font-size:14px;color:#4a5058;letter-spacing:0.573px;">#1293490129431023 - Lights</span>
<span class="t" id="t63" style="left:278.30px;top:731.00px;font-size:13px;color:#a2a7ac;letter-spacing:0.414px;">Description.</span>
<span class="t" id="t64" style="left:934.30px;top:711.00px;font-size:13px;color:#5a6068;">2</span>
<span class="t" id="t65" style="left:1019.20px;top:711.00px;font-size:13px;color:#5a6068;letter-spacing:0.352px;">USD 324.00</span>
<span class="t" id="t66" style="left:1159.20px;top:711.00px;font-size:13px;color:#5a6068;">0</span>
<span class="t" id="t67" style="left:1299.50px;top:711.00px;font-size:13px;color:#5a6068;letter-spacing:0.352px;">USD 648.00</span>
<span class="t" id="t68" style="left:1215.20px;top:776.00px;font-size:13px;color:#505963;font-weight:700;letter-spacing:0.229px;">Subtotal</span>
<span class="t" id="t69" style="left:1299.50px;top:776.00px;font-size:13px;color:#5a6068;letter-spacing:0.194px;">USD 1538.00</span>
<span class="t" id="t70" style="left:1209.00px;top:812.00px;font-size:13px;color:#505963;font-weight:700;letter-spacing:0.286px;">GST (3%)</span>
<span class="t" id="t71" style="left:1299.50px;top:812.00px;font-size:13px;color:#5a6068;letter-spacing:-0.074px;">USD 46.14</span>
<span class="t" id="t72" style="left:1193.80px;top:847.00px;font-size:13px;color:#505963;font-weight:700;letter-spacing:0.146px;">SGST (18%)</span>
<span class="t" id="t73" style="left:1299.50px;top:847.00px;font-size:13px;color:#5a6068;letter-spacing:0.186px;">USD 276.84</span>
<span class="t" id="t74" style="left:1238.00px;top:883.00px;font-size:13px;color:#505963;font-weight:700;letter-spacing:0.177px;">Total</span>
<span class="t" id="t75" style="left:1299.50px;top:883.00px;font-size:13px;color:#505963;font-weight:700;letter-spacing:0.023px;">USD</span>
<span class="t" id="t76" style="left:1299.50px;top:901.00px;font-size:13px;color:#505963;font-weight:700;letter-spacing:0.917px;">1860.98</span>
<span class="t" id="t77" style="left:1206.20px;top:937.00px;font-size:13px;color:#505963;font-weight:700;letter-spacing:0.138px;">Deposit</span>
<span class="t" id="t78" style="left:1299.50px;top:937.00px;font-size:13px;color:#505963;font-weight:700;letter-spacing:0.519px;">USD 372.20</span>
<span class="t" id="t79" style="left:126.30px;top:1008.00px;font-size:11px;color:#505963;font-weight:700;letter-spacing:-0.049px;">QUOTE TEMPLATE</span>
<span class="t" id="t80" style="left:126.30px;top:1029.00px;font-size:12px;color:#6b727a;letter-spacing:0.346px;">Template 1(dont choose)</span>
<span class="t" id="t81" style="left:559.50px;top:1008.00px;font-size:11px;color:#505963;font-weight:700;letter-spacing:-0.271px;">REMARKS</span>
<span class="t" id="t82" style="left:559.50px;top:1029.00px;font-size:12px;color:#6b727a;letter-spacing:0.350px;">Default remarks</span>
<span class="t" id="t83" style="left:126.30px;top:1089.00px;font-size:15px;color:#505963;font-weight:700;letter-spacing:-0.298px;">Other Details</span>
<span class="t" id="t84" style="left:126.30px;top:1125.00px;font-size:11px;color:#505963;font-weight:700;letter-spacing:-0.047px;">ZUPER STATUS</span>
<span class="t" id="t85" style="left:559.50px;top:1125.00px;font-size:11px;color:#505963;font-weight:700;letter-spacing:-0.241px;">SELECT</span>
<span class="t" id="t86" style="left:993.00px;top:1125.00px;font-size:11px;color:#505963;font-weight:700;letter-spacing:-0.113px;">RADIO</span>
<span class="t" id="t87" style="left:126.30px;top:1181.00px;font-size:11px;color:#505963;font-weight:700;letter-spacing:-0.136px;">CHECKBOX</span>
<span class="t" id="t88" style="left:559.50px;top:1181.00px;font-size:11px;color:#505963;font-weight:700;letter-spacing:-0.030px;">TEXT AREA</span>
<span class="t" id="t89" style="left:993.00px;top:1181.00px;font-size:11px;color:#505963;font-weight:700;letter-spacing:0.041px;">DATETIME INPUT</span>
<span class="t" id="t90" style="left:126.30px;top:1237.00px;font-size:11px;color:#505963;font-weight:700;letter-spacing:0.017px;">TIME INPUT</span>
<span class="t" id="t91" style="left:559.50px;top:1237.00px;font-size:11px;color:#505963;font-weight:700;letter-spacing:-0.054px;">DATE INPUT</span>
<span class="t" id="t92" style="left:993.00px;top:1237.00px;font-size:11px;color:#505963;font-weight:700;letter-spacing:-0.040px;">XERO ESTIMATE ID</span>
<span class="t" id="t93" style="left:126.30px;top:1293.00px;font-size:11px;color:#505963;font-weight:700;letter-spacing:-0.098px;">XERO ESTIMATE NUMBER</span>
<span class="t" id="t94" style="left:126.40px;top:1144.00px;font-size:15px;color:#80868d;letter-spacing:0.600px;">---</span>
<span class="t" id="t95" style="left:559.60px;top:1144.00px;font-size:15px;color:#80868d;letter-spacing:0.600px;">---</span>
<span class="t" id="t96" style="left:993.10px;top:1144.00px;font-size:15px;color:#80868d;letter-spacing:0.600px;">---</span>
<span class="t" id="t97" style="left:126.40px;top:1200.00px;font-size:15px;color:#80868d;letter-spacing:0.600px;">---</span>
<span class="t" id="t98" style="left:559.60px;top:1200.00px;font-size:15px;color:#80868d;letter-spacing:0.600px;">---</span>
<span class="t" id="t99" style="left:993.10px;top:1200.00px;font-size:15px;color:#80868d;letter-spacing:0.600px;">---</span>
<span class="t" id="t100" style="left:126.40px;top:1256.00px;font-size:15px;color:#80868d;letter-spacing:0.600px;">---</span>
<span class="t" id="t101" style="left:559.60px;top:1256.00px;font-size:15px;color:#80868d;letter-spacing:0.600px;">---</span>
<span class="t" id="t102" style="left:126.40px;top:1434.00px;font-size:15px;color:#80868d;letter-spacing:0.600px;">---</span>
<span class="t" id="t103" style="left:559.60px;top:1434.00px;font-size:15px;color:#80868d;letter-spacing:0.600px;">---</span>
<span class="t" id="t104" style="left:993.00px;top:1259.00px;font-size:12px;color:#6b727a;letter-spacing:0.799px;">e0fe2a6b-b669-45b2-b3f2-d538075f4906</span>
<span class="t" id="t105" style="left:126.30px;top:1315.00px;font-size:12px;color:#6b727a;letter-spacing:1.099px;">3348</span>
<span class="t" id="t106" style="left:126.30px;top:1375.00px;font-size:15px;color:#505963;font-weight:700;letter-spacing:-0.011px;">Test</span>
<span class="t" id="t107" style="left:126.30px;top:1415.00px;font-size:11px;color:#505963;font-weight:700;letter-spacing:-0.023px;">QUOTE INPUT TEST</span>
<span class="t" id="t108" style="left:559.50px;top:1415.00px;font-size:11px;color:#505963;font-weight:700;letter-spacing:0.125px;">TEXT INPUT</span>
<span class="t" id="t109" style="left:1462.90px;top:146.00px;font-size:13px;color:#505963;font-weight:700;letter-spacing:0.179px;">Customer Details</span>
<span class="t" id="t110" style="left:1811.70px;top:146.00px;font-size:13px;color:#3c8fe2;font-weight:700;letter-spacing:0.242px;">View Details</span>
<span class="t" id="t111" style="left:1558.20px;top:193.00px;font-size:18px;color:#4a5560;letter-spacing:0.234px;-webkit-text-stroke:.2px #4a5560;">Daniel</span>
<span class="t" id="t112" style="left:1480.00px;top:266.00px;font-size:13px;color:#6b737b;letter-spacing:-0.039px;">Email :</span>
<span class="t" id="t113" style="left:1480.00px;top:286.00px;font-size:13px;color:#3a4047;letter-spacing:0.192px;">daniel@mail.com</span>
<span class="t" id="t114" style="left:1480.00px;top:325.00px;font-size:13px;color:#6b737b;letter-spacing:0.219px;">Home :</span>
<span class="t" id="t115" style="left:1480.00px;top:345.00px;font-size:13px;color:#3a4047;letter-spacing:0.837px;">23564894</span>
<span class="t" id="t116" style="left:1480.00px;top:385.00px;font-size:13px;color:#6b737b;letter-spacing:0.281px;">Mobile :</span>
<span class="t" id="t117" style="left:1480.00px;top:404.00px;font-size:13px;color:#3a4047;letter-spacing:0.615px;">214893647</span>
<span class="t" id="t118" style="left:1480.00px;top:444.00px;font-size:13px;color:#6b737b;letter-spacing:0.395px;">Created At :</span>
<span class="t" id="t119" style="left:1480.00px;top:463.00px;font-size:13px;color:#5a6068;letter-spacing:0.652px;">2023/03/23 12:44</span>
<span class="t" id="t120" style="left:1479.20px;top:548.00px;font-size:14px;color:#505963;font-weight:700;letter-spacing:0.407px;">Attachments (0)</span>
<span class="t" id="t121" style="left:1478.80px;top:852.00px;font-size:14px;color:#505963;font-weight:700;letter-spacing:0.487px;">Notes (0)</span>
<span class="t" id="t122" style="left:1565.75px;top:762.00px;font-size:13px;color:#4b95ea;letter-spacing:0.425px;">Attach any files related to this quote</span>
<span class="t" id="t123" style="left:1580.05px;top:1127.00px;font-size:13px;color:#4b95ea;letter-spacing:0.442px;">Add notes related to this Quote</span>
<span class="t" id="t124" style="left:1724.50px;top:9.00px;font-size:10.5px;color:#fff;font-weight:700;transform:translateX(-50%);">2</span>
</body></html>
